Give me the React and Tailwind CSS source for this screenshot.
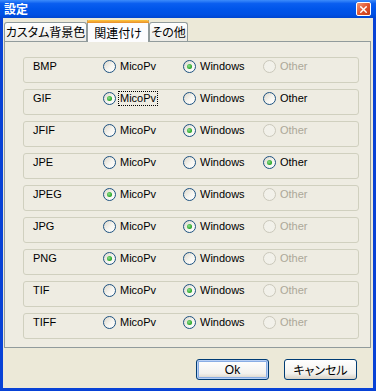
import { X } from "lucide-react";

const rows = [
  { ext: "BMP", sel: 1, other: false },
  { ext: "GIF", sel: 0, other: true, focus: true },
  { ext: "JFIF", sel: 1, other: false },
  { ext: "JPE", sel: 2, other: true },
  { ext: "JPEG", sel: 0, other: false },
  { ext: "JPG", sel: 1, other: false },
  { ext: "PNG", sel: 0, other: false },
  { ext: "TIF", sel: 1, other: false },
  { ext: "TIFF", sel: 1, other: false },
];

const options = ["MicoPv", "Windows", "Other"];

const jp = "font-['Noto_Sans_CJK_JP',sans-serif] [font-feature-settings:'palt']";
const latin = "font-['Liberation_Sans','Noto_Sans_CJK_JP',sans-serif]";

function Radio({ checked, disabled }) {
  return (
    <span
      className={`w-[13px] h-[13px] rounded-full border flex items-center justify-center shrink-0 ${
        disabled
          ? "border-[#cac8bb] bg-[#f2f1ea]"
          : "border-[#1c5180] bg-[linear-gradient(135deg,#dcd7cb_0%,#f6f5f0_55%,#ffffff_100%)]"
      }`}
    >
      {checked && (
        <span className="w-[5px] h-[5px] rounded-full bg-[radial-gradient(circle_at_40%_40%,#8fe08f,#21a121_70%)]" />
      )}
    </span>
  );
}

function Tab({ label, active, className = "" }) {
  if (active) {
    return (
      <div
        className={`relative z-10 -mb-px h-[22px] border-x border-[#919b9c] bg-[#fcfcfe] flex flex-col ${className}`}
      >
        <div className="h-[3px] rounded-t-[2px] bg-[linear-gradient(#ffc83c,#e68b2c)] -mx-px" />
        <div className={`flex-1 flex items-center justify-center text-[12px] leading-none text-black ${jp}`}>
          {label}
        </div>
      </div>
    );
  }
  return (
    <div
      className={`h-[19px] border border-b-0 border-[#919b9c] rounded-t-[3px] bg-[linear-gradient(#ffffff,#ecebe6)] flex items-center justify-center text-[12px] leading-none text-black ${jp} ${className}`}
    >
      {label}
    </div>
  );
}

function Button({ children, def, className = "" }) {
  return (
    <button
      className={`w-[73px] h-[21px] rounded-[3px] border border-[#003c74] bg-[linear-gradient(#ffffff,#f3f2ee_70%,#d6d0c5)] flex items-center justify-center text-[12px] leading-none text-black ${
        def ? "shadow-[inset_0_0_0_1px_#b8d0f5,inset_0_0_0_2px_#89ade4]" : ""
      } ${className}`}
    >
      {children}
    </button>
  );
}

export default function App() {
  return (
    <div className="w-[376px] h-[391px] flex flex-col bg-[#0842d6] select-none">
      {/* Title bar */}
      <div className="h-[18px] shrink-0 flex items-center justify-between pl-[4px] pr-[5px] bg-[linear-gradient(#3d8cfb_0%,#0a5ef0_20%,#0055ea_50%,#0050e4_80%,#0046d0_100%)]">
        <span className={`text-white font-bold text-[12px] leading-none ${jp}`}>設定</span>
        <span className="w-[15px] h-[14px] rounded-[2px] border border-white bg-[linear-gradient(135deg,#f29a7a,#e0502a_55%,#c23b16)] flex items-center justify-center">
          <X size={11} strokeWidth={3.2} color="white" />
        </span>
      </div>

      {/* Body */}
      <div className="flex-1 mx-[3px] mb-[3px] bg-[#ece9d8] flex flex-col pl-px pt-px">
        <div className="flex items-end h-[22px]">
          <Tab label="カスタム背景色" className="w-[83px]" />
          <Tab label="関連付け" active className="w-[62px]" />
          <Tab label="その他" className="w-[39px]" />
        </div>

        <div className="w-[367px] h-[307px] border border-[#919b9c] bg-[#eeece2] pl-[18px] pt-[15px] flex flex-col gap-[6px]">
          {rows.map((r) => (
            <div
              key={r.ext}
              className={`w-[336px] h-[26px] shrink-0 rounded-[3px] border border-[#d0d0bf] pt-[2px] pl-[9px] flex items-start text-[11px] leading-[13px] text-black ${latin}`}
            >
              <span className="w-[70px]">{r.ext}</span>
              {options.map((o, i) => {
                const disabled = i === 2 && !r.other;
                return (
                  <span key={o} className="w-[80px] flex items-center gap-[4px]">
                    <Radio checked={r.sel === i} disabled={disabled} />
                    <span
                      className={`${disabled ? "text-[#aca899]" : "text-black"} ${
                        r.focus && i === 0 ? "outline outline-1 outline-dotted outline-black -ml-px px-px" : ""
                      }`}
                    >
                      {o}
                    </span>
                  </span>
                );
              })}
            </div>
          ))}
        </div>

        <div className="flex justify-end gap-[15px] mt-[11px] pr-[16px]">
          <Button def className={latin}>Ok</Button>
          <Button className={jp}>キャンセル</Button>
        </div>
      </div>
    </div>
  );
}
